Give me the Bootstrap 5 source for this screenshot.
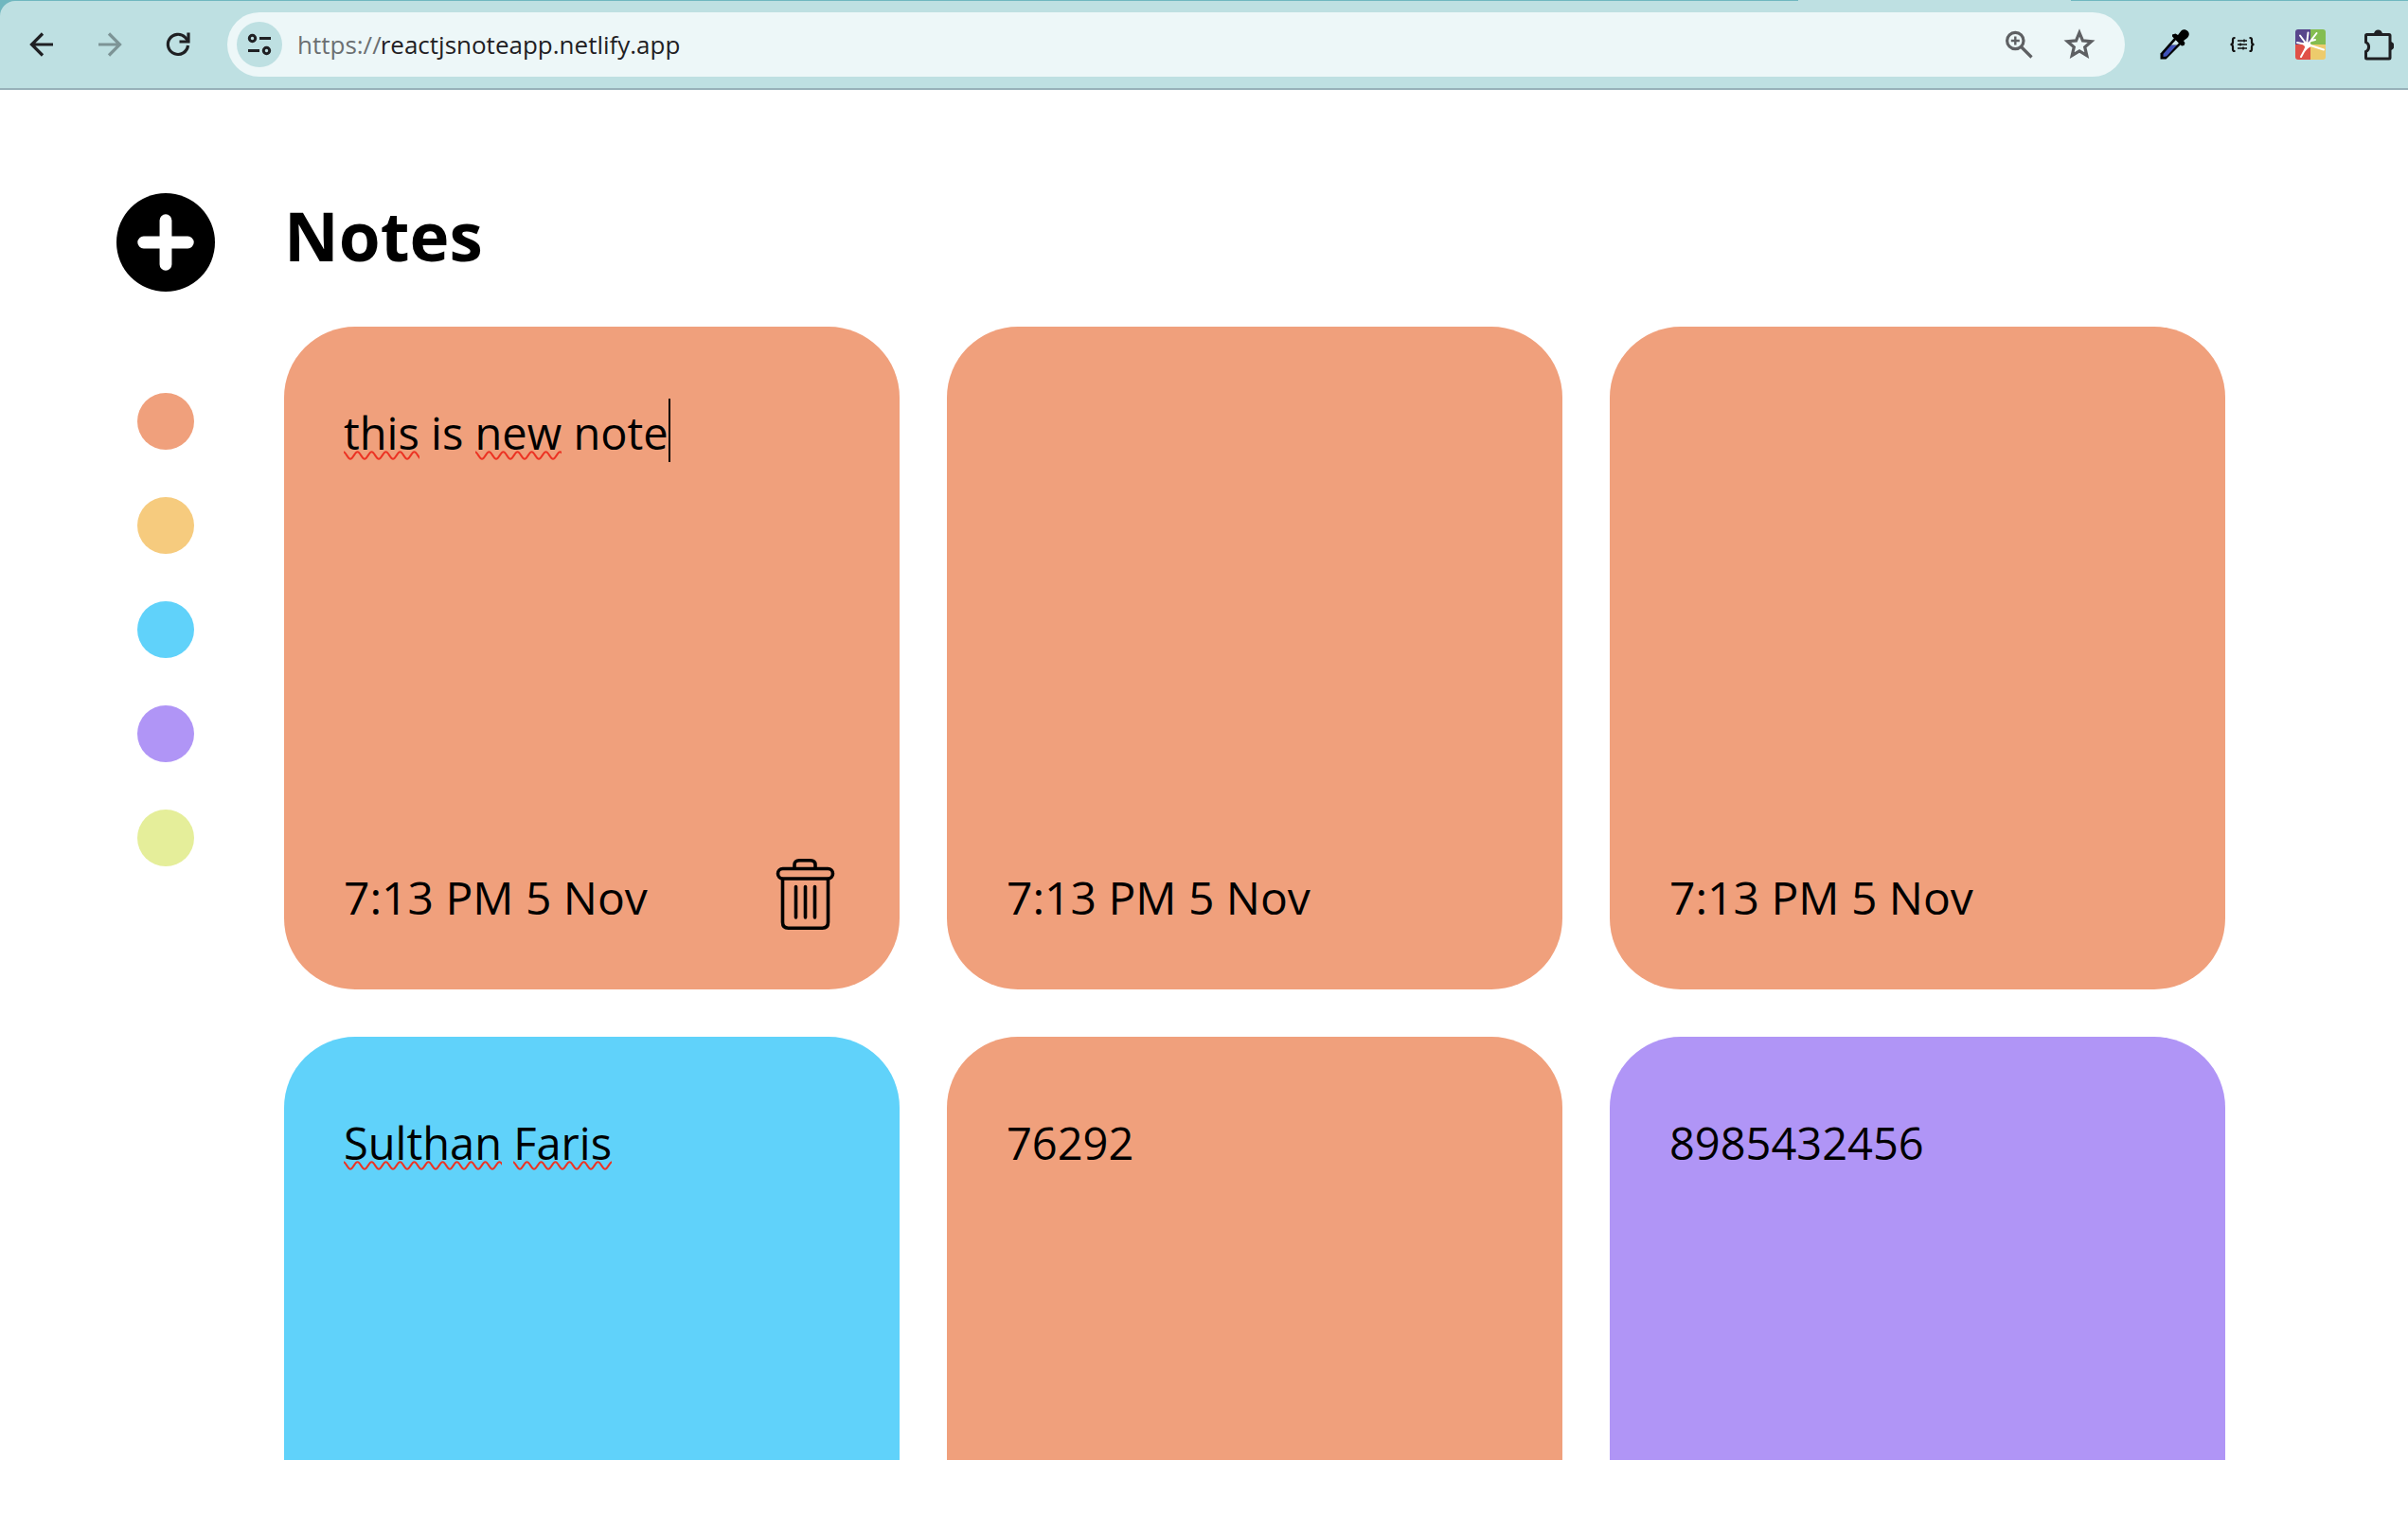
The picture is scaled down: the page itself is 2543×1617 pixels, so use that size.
<!DOCTYPE html>
<html lang="en">
<head>
<meta charset="utf-8">
<meta name="viewport" content="width=device-width, initial-scale=1">
<title>Notes</title>
<link href="https://cdn.jsdelivr.net/npm/bootstrap@5.3.0/dist/css/bootstrap.min.css" rel="stylesheet">
<style>
  :root { --orange: #f0a07c; --yellow: #f6cb7e; --blue: #60d2fa; --violet: #b095f6; --lime: #e5ee9a; }
  body { font-family: "Open Sans", "Noto Sans", sans-serif; color: #000; background: #fff; }
  svg { display: block; }

  /* browser toolbar */
  .chrome-frame { background: #70b7bf; padding-top: 1px; }
  .chrome-bar { background: #bee0e2; border-bottom: 2px solid #97b1b9; border-top-left-radius: 16px; padding: 12px 0 12px 8px; }
  .active-tab { right: 356px; width: 288px; height: 1px; background: #bee0e2; }
  .tool-btn { width: 72px; height: 68px; border: 0; color: #1f2023; }
  .tool-btn:disabled { color: #7d9496; border: 0; opacity: 1; }
  .tool-last { width: 67px; }
  .address { background: #edf7f8; height: 68px; margin: 0 16px; padding: 0 16px 0 10px; }
  .site-info { width: 48px; height: 48px; background: #bee0e2; color: #1f2023; }
  .scheme, .url-input, .url-input:focus { font-size: 26px; line-height: 36px; background: transparent; border: 0; padding: 0; box-shadow: none; }
  .scheme { color: #6b6f71; }
  .url-input, .url-input:focus { color: #1f2023; }
  .bar-icon { width: 64px; height: 48px; border: 0; color: #5e6063; }

  /* notes page */
  .side { width: 104px; margin-left: 123px; padding-top: 109px; }
  .add-btn, .add-btn svg { width: 104px; height: 104px; }
  .palette { margin-top: 107px; gap: 50px; }
  .swatch { width: 60px; height: 60px; border: 0; }
  .board { padding: 102px 100px 75px 73px; min-width: 0; }
  .board-title { font-size: 71px; line-height: 104px; font-weight: 700; margin: 0 0 44px; }
  .note-grid { display: grid; grid-template-columns: repeat(auto-fill, 650px); gap: 50px; min-height: 0; }
  .note { height: 700px; border-radius: 75px; padding: 75px 62px 60px 63px; }
  .note-text, .note-text:focus { font-size: 47px; line-height: 75px; color: #000; background: transparent; border: 0; outline: 0; padding: 0; resize: none; box-shadow: none; overflow: hidden; }
  .note-time { font-size: 48px; line-height: 75px; }
  .trash { width: 75px; height: 75px; border: 0; margin-top: -3px; }
  .typo { background: url("data:image/svg+xml,%3Csvg xmlns='http://www.w3.org/2000/svg' width='15' height='10'%3E%3Cpath d='M-7.500 1.250C-4.500 1.250-3 8.750 0 8.750S4.500 1.250 7.500 1.250S12 8.750 15 8.750S19.500 1.250 22.500 1.250' fill='none' stroke='%23ec3323' stroke-width='2.200'/%3E%3C/svg%3E") 7px 51px repeat-x; }
  .caret { display: inline-block; width: 2px; height: 67px; background: #000; vertical-align: 0; margin: -13px 0; }
  .bg-o { background: var(--orange); } .bg-y { background: var(--yellow); } .bg-b { background: var(--blue); }
  .bg-v { background: var(--violet); } .bg-l { background: var(--lime); }
</style>
<script src="https://cdn.jsdelivr.net/npm/bootstrap@5.3.0/dist/js/bootstrap.bundle.min.js"></script>
</head>
<body class="vh-100 d-flex flex-column overflow-hidden">

<header class="chrome-frame position-relative flex-shrink-0">
  <span class="active-tab position-absolute top-0"></span>
  <div class="chrome-bar d-flex align-items-center">
    <button class="btn tool-btn p-0 d-flex align-items-center justify-content-center" aria-label="Back">
      <svg width="36" height="36" viewBox="0 0 36 36" fill="none" stroke="currentColor" stroke-width="3.200"><path d="M30 18H8M19 6.500L7.500 18 19 29.500"/></svg>
    </button>
    <button class="btn tool-btn p-0 d-flex align-items-center justify-content-center" aria-label="Forward" disabled>
      <svg width="36" height="36" viewBox="0 0 36 36" fill="none" stroke="currentColor" stroke-width="3.200"><path d="M6 18h22M17 6.500L28.500 18 17 29.500"/></svg>
    </button>
    <button class="btn tool-btn p-0 d-flex align-items-center justify-content-center" aria-label="Reload">
      <svg width="36" height="36" viewBox="0 0 36 36" fill="none" stroke="currentColor" stroke-width="3.200"><path d="M28.500 19A10.600 10.600 0 1 1 25.600 10.500l3 3.500"/><path d="M29 5.500v9.500h-9.500"/></svg>
    </button>
    <div class="address d-flex align-items-center flex-grow-1 rounded-pill">
      <button class="btn site-info rounded-circle p-0 border-0 d-flex align-items-center justify-content-center flex-shrink-0" aria-label="Site information">
        <svg width="28" height="28" viewBox="0 0 28 28" fill="none" stroke="currentColor" stroke-width="3"><circle cx="6.500" cy="7.500" r="3.200"/><path d="M14 7.500h12M2 20.500h12"/><circle cx="21.500" cy="20.500" r="3.200"/></svg>
      </button>
      <div class="input-group flex-nowrap ms-3">
        <label class="scheme input-group-text" for="url">https://</label>
        <input class="url-input form-control" id="url" type="text" value="reactjsnoteapp.netlify.app" spellcheck="false">
      </div>
      <button class="btn bar-icon p-0 flex-shrink-0 d-flex align-items-center justify-content-center" aria-label="Zoom">
        <svg width="32" height="32" viewBox="0 0 32 32" fill="none" stroke="currentColor" stroke-width="3.200"><circle cx="12.300" cy="12" r="8.700"/><path d="M18.500 18.500L29.500 29.500"/><path d="M12.300 7.500v9M7.800 12h9" stroke-width="2.400"/></svg>
      </button>
      <button class="btn bar-icon p-0 flex-shrink-0 d-flex align-items-center justify-content-center" aria-label="Bookmark this page">
        <svg width="36" height="36" viewBox="0 0 36 36" fill="none" stroke="currentColor" stroke-width="3.200"><path d="M18 5.500l3.500 8.400 9.100.8-6.900 6 2.100 8.900-7.800-4.700-7.800 4.700 2.100-8.900-6.900-6 9.100-.8z"/></svg>
      </button>
    </div>
    <button class="btn tool-btn p-0 d-flex align-items-center justify-content-center" aria-label="Colour picker">
      <svg width="32" height="32" viewBox="0 0 32 32"><path d="M1.500 31.500v-6L17 8l7 7L7.500 31.500z" fill="#000"/><path d="M4.500 26L13 16.500h6L8 28.500l-3.500.5z" fill="#4052b8"/><path d="M13 16.500l5-5.500 3 3.500-2 2z" fill="#cfe8ec"/><path d="M14 5.500l3.500-1 2.500 1.500 3.500-4.500c2-2 5-1.500 7 .5s1.500 5-.5 7L26 12l1.500 2.500-1 2.500-2.500.5-10-10z" fill="#000"/></svg>
    </button>
    <button class="btn tool-btn p-0 d-flex align-items-center justify-content-center" aria-label="JSON viewer">
      <svg width="28" height="18" viewBox="0 0 28 18" fill="none" stroke="#111" stroke-width="2.200"><path d="M6.500 2H5.800Q4 2 4 4v2.500Q4 9 1.500 9 4 9 4 11.500V14q0 2 1.800 2h.7M21.500 2h.7Q24 2 24 4v2.500Q24 9 26.500 9 24 9 24 11.500V14q0 2-1.800 2h-.7"/><path d="M9 5h10M9 9h10M9 13h10" stroke-width="1.500"/><path d="M16 3.500v3M12 7.500v3M15 11.500v3" stroke-width="1.500"/></svg>
    </button>
    <button class="btn tool-btn p-0 d-flex align-items-center justify-content-center" aria-label="Extension">
      <svg width="32" height="32" viewBox="0 0 32 32"><defs><clipPath id="tile"><rect width="32" height="32" rx="3"/></clipPath></defs><g clip-path="url(#tile)"><path fill="#58468c" d="M0 0h16v16H0z"/><path fill="#84bd50" d="M16 0h16v16H16z"/><path fill="#e05047" d="M0 16h16v16H0z"/><path fill="#edcb6c" d="M16 16h16v16H16z"/></g><g stroke="#fff" stroke-width="2" stroke-linecap="round" fill="none"><path d="M12 16L13.500 3.500M12 16L5 6.500M12 16L2 14M14 15l8.500-11M17 12l4-1M16 17l14 4.500M12 18L6 29"/></g><path d="M11 13l4.500 1 2 3.500-4 2.500-4 4 .5-6L7 15z" fill="#fff"/></svg>
    </button>
    <button class="btn tool-btn tool-last p-0 d-flex align-items-center justify-content-center" aria-label="Extensions">
      <svg width="36" height="36" viewBox="0 0 36 36"><path d="M7 7.500h24q1 0 1 1V32q0 1-1 1H7.500q-1 0-1-1v-6.500a5.600 5.600 0 0 0 0-10V8.500q0-1 1-1z" fill="none" stroke="#1f2023" stroke-width="3"/><path d="M15 7a4.500 4.500 0 0 1 9 0zM32 15a4.500 4.500 0 0 1 0 9z" fill="#1f2023"/></svg>
    </button>
  </div>
</header>

<div class="d-flex flex-grow-1 overflow-hidden">
  <aside class="side d-flex flex-column align-items-center flex-shrink-0">
    <button class="btn add-btn p-0 border-0 rounded-circle flex-shrink-0" aria-label="Add note">
      <svg viewBox="0 0 105 105"><circle cx="52.500" cy="52.500" r="52.500"/><path d="M52.500 29v47M29 52.500h47" stroke="#fff" stroke-width="13" stroke-linecap="round"/></svg>
    </button>
    <div class="palette d-flex flex-column">
      <button class="swatch rounded-circle bg-o" aria-label="Orange"></button>
      <button class="swatch rounded-circle bg-y" aria-label="Yellow"></button>
      <button class="swatch rounded-circle bg-b" aria-label="Blue"></button>
      <button class="swatch rounded-circle bg-v" aria-label="Violet"></button>
      <button class="swatch rounded-circle bg-l" aria-label="Lime"></button>
    </div>
  </aside>

  <main class="board d-flex flex-column flex-grow-1">
    <h1 class="board-title">Notes</h1>
    <div class="note-grid flex-grow-1 overflow-hidden">
      <article class="note bg-o d-flex flex-column">
        <div class="note-text flex-grow-1" contenteditable="true" role="textbox" aria-label="Note" spellcheck="false"><span class="typo">this</span> is <span class="typo">new</span> note<span class="caret"></span></div>
        <div class="d-flex justify-content-between align-items-start">
          <time class="note-time">7:13 PM 5 Nov</time>
          <button class="btn trash p-0" aria-label="Delete note">
            <svg width="75" height="75" viewBox="0 0 75 75" fill="none" stroke="#000" stroke-width="3.600" stroke-linecap="round" stroke-linejoin="round"><path d="M26 9V6.500Q26 1.800 31 1.800H43Q48 1.800 48 6.500V9"/><rect x="8.500" y="10.500" width="58" height="10.500" rx="5.200"/><path d="M13.500 21.500V67q0 6.200 6 6.200h36q6 0 6-6.200V21.500M27.500 29.500V62M37.500 29.500V62M47.500 29.500V62"/></svg>
          </button>
        </div>
      </article>
      <article class="note bg-o d-flex flex-column">
        <textarea class="note-text form-control flex-grow-1" aria-label="Note" spellcheck="false"></textarea>
        <time class="note-time">7:13 PM 5 Nov</time>
      </article>
      <article class="note bg-o d-flex flex-column">
        <textarea class="note-text form-control flex-grow-1" aria-label="Note" spellcheck="false"></textarea>
        <time class="note-time">7:13 PM 5 Nov</time>
      </article>
      <article class="note bg-b d-flex flex-column">
        <div class="note-text flex-grow-1" contenteditable="true" role="textbox" aria-label="Note" spellcheck="false"><span class="typo">Sulthan</span> <span class="typo">Faris</span></div>
      </article>
      <article class="note bg-o d-flex flex-column">
        <textarea class="note-text form-control flex-grow-1" aria-label="Note" spellcheck="false">76292</textarea>
      </article>
      <article class="note bg-v d-flex flex-column">
        <textarea class="note-text form-control flex-grow-1" aria-label="Note" spellcheck="false">8985432456</textarea>
      </article>
    </div>
  </main>
</div>
</body>
</html>
